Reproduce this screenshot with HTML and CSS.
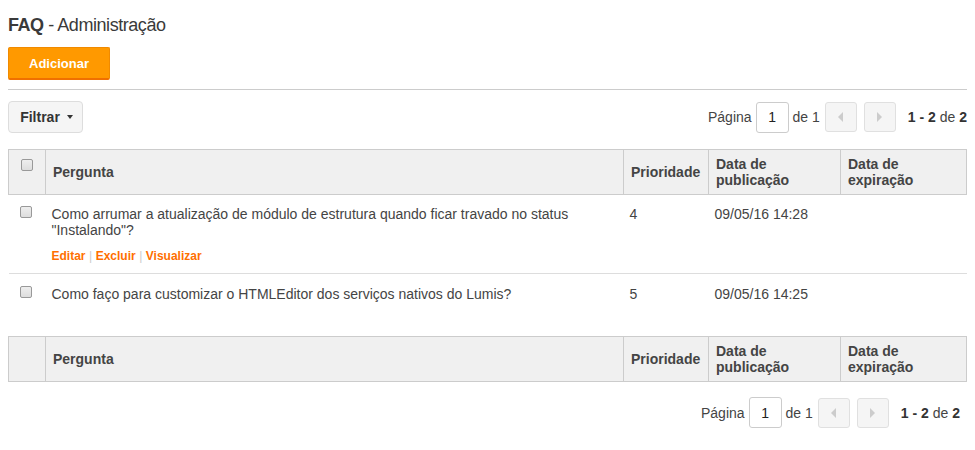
FILE: index.html
```html
<!DOCTYPE html>
<html lang="pt">
<head>
<meta charset="utf-8">
<title>FAQ - Administração</title>
<link rel="stylesheet" href="styles.css">
</head>
<body>
<h1 class="title"><b>FAQ</b> - Administração</h1>
<div class="actions"><button class="btn-add">Adicionar</button></div>
<hr class="sep">
<div class="toolbar">
  <button class="btn-filter">Filtrar <span class="caret"></span></button>
  <div class="pager">
    <span class="lbl">Página</span>
    <span class="page-input">1</span>
    <span class="lbl">de 1</span>
    <span class="nav"><svg width="6" height="10" viewBox="0 0 6 10"><path d="M5 0 L0 5 L5 10 Z" fill="#ccc"/></svg></span>
    <span class="nav"><svg width="6" height="10" viewBox="0 0 6 10"><path d="M0 0 L5 5 L0 10 Z" fill="#ccc"/></svg></span>
    <span class="count"><b>1 - 2</b> de <b>2</b></span>
  </div>
</div>
<table class="grid">
  <colgroup><col class="c-chk"><col><col class="c-pri"><col class="c-pub"><col class="c-exp"></colgroup>
  <thead>
    <tr><th class="chk"><span class="cb"></span></th><th>Pergunta</th><th>Prioridade</th><th>Data de publicação</th><th>Data de expiração</th></tr>
  </thead>
  <tbody>
    <tr class="first">
      <td class="chk"><span class="cb"></span></td>
      <td>Como arrumar a atualização de módulo de estrutura quando ficar travado no status "Instalando"?
        <div class="links"><a href="#">Editar</a><span class="bar">|</span><a href="#">Excluir</a><span class="bar">|</span><a href="#">Visualizar</a></div>
      </td>
      <td>4</td>
      <td>09/05/16 14:28</td>
      <td></td>
    </tr>
    <tr>
      <td class="chk"><span class="cb"></span></td>
      <td>Como faço para customizar o HTMLEditor dos serviços nativos do Lumis?</td>
      <td>5</td>
      <td>09/05/16 14:25</td>
      <td></td>
    </tr>
  </tbody>
</table>
<table class="grid foot">
  <colgroup><col class="c-chk"><col><col class="c-pri"><col class="c-pub"><col class="c-exp"></colgroup>
  <thead>
    <tr><th class="chk"></th><th>Pergunta</th><th>Prioridade</th><th>Data de publicação</th><th>Data de expiração</th></tr>
  </thead>
</table>
<div class="toolbar bottom">
  <div class="pager">
    <span class="lbl">Página</span>
    <span class="page-input">1</span>
    <span class="lbl">de 1</span>
    <span class="nav"><svg width="6" height="10" viewBox="0 0 6 10"><path d="M5 0 L0 5 L5 10 Z" fill="#ccc"/></svg></span>
    <span class="nav"><svg width="6" height="10" viewBox="0 0 6 10"><path d="M0 0 L5 5 L0 10 Z" fill="#ccc"/></svg></span>
    <span class="count"><b>1 - 2</b> de <b>2</b></span>
  </div>
</div>
</body>
</html>
```
FILE: styles.css
```css
body {
  margin: 8px;
  font-family: "Liberation Sans", Arial, sans-serif;
  color: #444;
  font-size: 14px;
  background: #fff;
}
.title {
  margin: 7px 0 0 0;
  font-size: 18px;
  line-height: 20px;
  font-weight: normal;
  color: #3a3a3a;
  letter-spacing: -0.45px;
}
.title b { font-weight: bold; }
.actions { margin-top: 12px; }
.btn-add {
  width: 102px;
  height: 33px;
  background: #ff9900;
  border: 1px solid #f08a00;
  border-bottom: 2px solid #f07000;
  border-radius: 2px;
  color: #fff;
  font-family: inherit;
  font-weight: bold;
  font-size: 13px;
  padding: 0;
}
.sep {
  border: 0;
  border-top: 1px solid #ccc;
  margin: 9px 0 0 0;
}
.toolbar {
  display: flex;
  justify-content: space-between;
  align-items: center;
  margin-top: 11px;
}
.btn-filter {
  height: 32px;
  width: 75px;
  background: #f5f5f5;
  border: 1px solid #ddd;
  border-radius: 4px;
  font-family: inherit;
  font-weight: bold;
  font-size: 14px;
  color: #333;
  padding: 0 0 0 2px;
  display: flex;
  align-items: center;
  justify-content: center;
  gap: 7px;
}
.caret {
  width: 0; height: 0;
  border-left: 3px solid transparent;
  border-right: 3px solid transparent;
  border-top: 4px solid #333;
}
.pager {
  display: flex;
  align-items: center;
  margin-left: auto;
}
.lbl { color: #444; }
.page-input {
  width: 31px;
  height: 29px;
  border: 1px solid #ccc;
  border-radius: 3px;
  display: flex;
  align-items: center;
  justify-content: center;
  margin: 0 4px 0 4px;
  color: #222;
}
.nav {
  width: 30px;
  height: 28px;
  border: 1px solid #e0e0e0;
  border-radius: 3px;
  background: #f5f5f5;
  display: flex;
  align-items: center;
  justify-content: center;
  margin-left: 5px;
}
.nav + .nav { margin-left: 7px; }
.count { margin-left: 12px; color: #444; }
.count b { color: #333; }
.grid {
  width: 100%;
  border-collapse: collapse;
  table-layout: fixed;
  margin-top: 16px;
}
.c-chk { width: 37px; }
.c-pri { width: 85px; }
.c-pub { width: 132px; }
.c-exp { width: 126px; }
.grid th {
  background: #f0f0f0;
  border: 1px solid #ccc;
  text-align: left;
  font-weight: bold;
  color: #444;
  line-height: 16px;
  padding: 6px 7px;
  vertical-align: middle;
}
.grid th.chk { vertical-align: top; padding-top: 9px; }
.grid td {
  line-height: 16px;
  padding: 12px 6px 11px 6px;
  vertical-align: top;
  color: #444;
}
.grid tbody tr.first td { border-bottom: 1px solid #ddd; padding-top: 11px; padding-bottom: 9px; }
.cb {
  display: block;
  width: 10px;
  height: 10px;
  margin-left: 5px;
  border: 1px solid #999;
  border-radius: 2px;
  background: linear-gradient(#eee, #ddd);
}
.links {
  margin-top: 10px;
  font-size: 12px;
  font-weight: bold;
  line-height: 16px;
}
.links a { color: #ff6f00; text-decoration: none; }
.bar { color: #ccc; font-weight: normal; margin: 0 3.5px; }
.foot { margin-top: 23px; }
.bottom { margin-top: 15px; padding-right: 7px; }
```
